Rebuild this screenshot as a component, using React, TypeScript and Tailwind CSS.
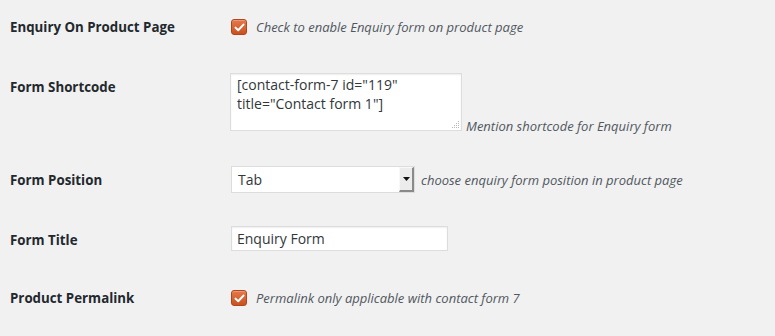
import React from 'react';

const font = { fontFamily: '"Open Sans", "Liberation Sans", sans-serif' };

const Checkbox = () => (
  <span className="w-4 h-4 shrink-0 rounded-[3px] border border-[#b0461c] bg-gradient-to-b from-[#e4794a] to-[#c9521f] flex items-center justify-center shadow-[inset_0_1px_0_rgba(255,255,255,0.25)]">
    <svg width="11" height="9" viewBox="0 0 11 9" fill="none">
      <path d="M1.5 4.6 L4.2 7.2 L9.5 1.6" stroke="#fff" strokeWidth="2" strokeLinecap="round" strokeLinejoin="round" />
    </svg>
  </span>
);

const Label = ({ children, pt }: { children: React.ReactNode; pt: string }) => (
  <div className={`w-[220px] shrink-0 pl-[10px] text-[13.3px] leading-[18px] font-bold text-[#23282d] ${pt}`}>{children}</div>
);

const Desc = ({ children, className = '' }: { children: React.ReactNode; className?: string }) => (
  <span className={`text-[13px] leading-[18px] italic text-[#50575e] ${className}`}>{children}</span>
);

export default function App() {
  return (
    <div className="w-[775px] h-[336px] bg-[#f1f1f1] overflow-hidden" style={font}>
      {/* Enquiry on product page */}
      <div className="flex items-start h-[58px]">
        <Label pt="pt-[18px]">Enquiry On Product Page</Label>
        <div className="pl-[11px] pt-[18px] h-[36px] flex items-center gap-[9px]">
          <Checkbox />
          <Desc>Check to enable Enquiry form on product page</Desc>
        </div>
      </div>

      {/* Shortcode */}
      <div className="flex items-start h-[93px]">
        <Label pt="pt-[20px]">Form Shortcode</Label>
        <div className="pl-[10px] pt-[15px] flex items-end gap-[4px]">
          <div className="relative w-[232px] h-[58px] bg-white border border-[#dddddd] shadow-[inset_0_1px_2px_rgba(0,0,0,0.07)] px-[6px] pt-[1px] text-[14px] leading-[19px] text-[#32373c]">
            [contact-form-7 id="119"
            <br />
            title="Contact form 1"]
            <svg className="absolute right-[1px] bottom-[1px]" width="9" height="9" viewBox="0 0 9 9">
              <g fill="#b8b8b8">
                <rect x="7" y="1" width="1" height="1" />
                <rect x="5" y="3" width="1" height="1" />
                <rect x="7" y="3" width="1" height="1" />
                <rect x="3" y="5" width="1" height="1" />
                <rect x="5" y="5" width="1" height="1" />
                <rect x="7" y="5" width="1" height="1" />
                <rect x="1" y="7" width="1" height="1" />
                <rect x="3" y="7" width="1" height="1" />
                <rect x="5" y="7" width="1" height="1" />
                <rect x="7" y="7" width="1" height="1" />
              </g>
            </svg>
          </div>
          <Desc className="-mb-[4px]">Mention shortcode for Enquiry form</Desc>
        </div>
      </div>

      {/* Position */}
      <div className="flex items-start h-[60px]">
        <Label pt="pt-[20px]">Form Position</Label>
        <div className="pl-[11px] pt-[15px] flex items-center gap-[6px] h-[42px]">
          <div className="w-[184px] h-[27px] bg-white border border-[#dddddd] flex items-stretch">
            <span className="flex-1 pl-[6px] text-[14px] leading-[25px] text-[#32373c]">Tab</span>
            <span className="w-[15px] bg-[#ececec] border-l border-t border-l-[#f8f8f8] border-t-[#f8f8f8] border-r-2 border-b-2 border-r-[#8a8a8a] border-b-[#8a8a8a] flex items-center justify-center">
              <svg width="7" height="4" viewBox="0 0 7 4">
                <path d="M0 0 H7 L3.5 4 Z" fill="#111" />
              </svg>
            </span>
          </div>
          <Desc>choose enquiry form position in product page</Desc>
        </div>
      </div>

      {/* Title */}
      <div className="flex items-start h-[60px]">
        <Label pt="pt-[20px]">Form Title</Label>
        <div className="pl-[11px] pt-[15px]">
          <div className="w-[217px] h-[25px] bg-white border border-[#dddddd] shadow-[inset_0_1px_2px_rgba(0,0,0,0.07)] pl-[5px] text-[14px] leading-[23px] text-[#32373c]">
            Enquiry Form
          </div>
        </div>
      </div>

      {/* Permalink */}
      <div className="flex items-start">
        <Label pt="pt-[18px]">Product Permalink</Label>
        <div className="pl-[11px] pt-[18px] h-[36px] flex items-center gap-[9px]">
          <Checkbox />
          <Desc>Permalink only applicable with contact form 7</Desc>
        </div>
      </div>
    </div>
  );
}
